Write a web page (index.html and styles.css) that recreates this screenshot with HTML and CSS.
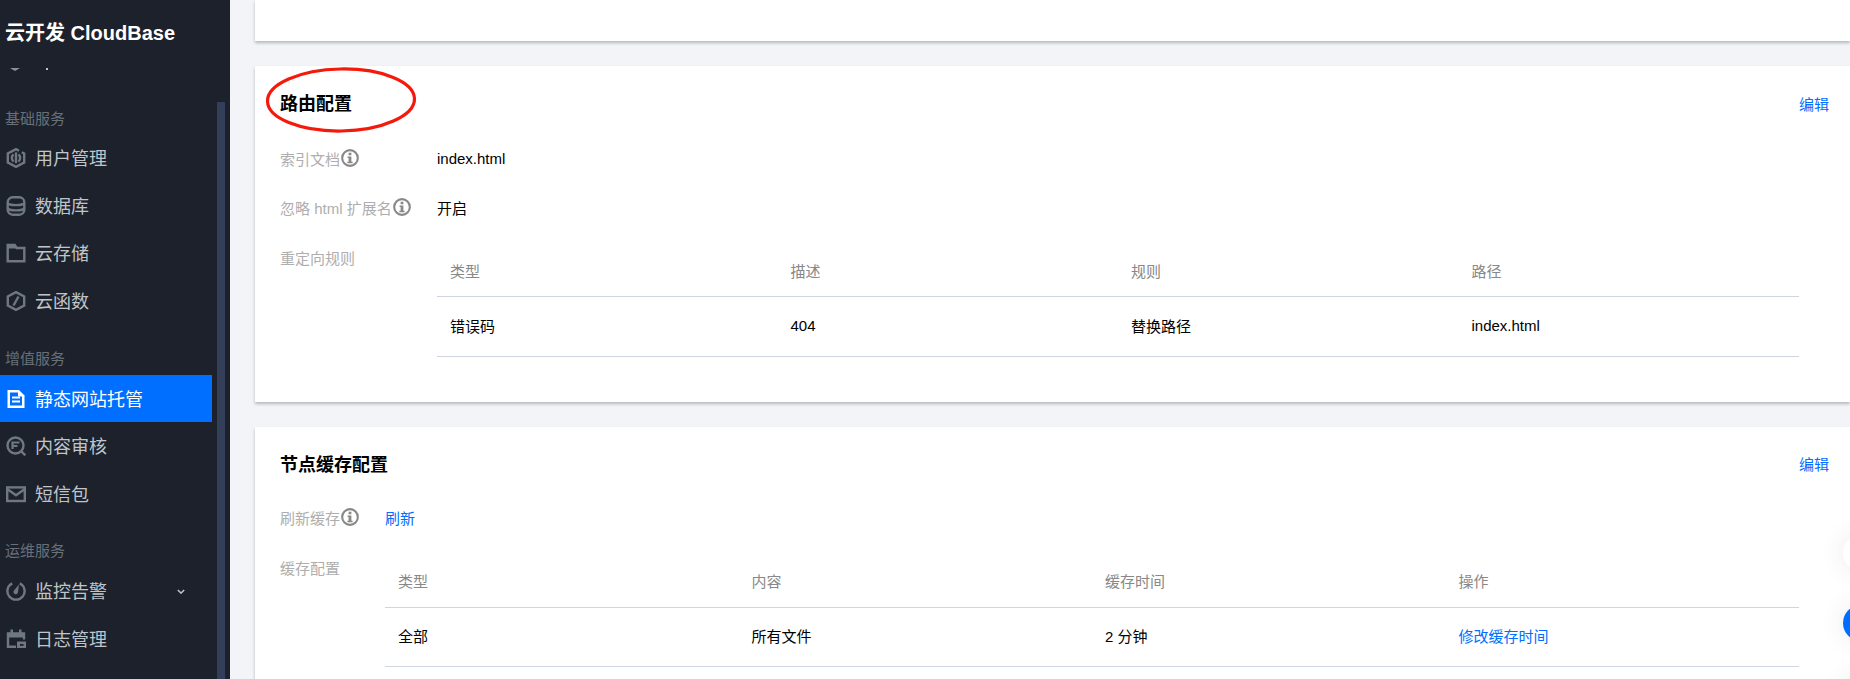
FILE: index.html
```html
<!DOCTYPE html>
<html lang="zh-CN">
<head>
<meta charset="utf-8">
<title>云开发 CloudBase</title>
<link rel="stylesheet" href="styles.css">
</head>
<body>
<svg class="defs" width="0" height="0" aria-hidden="true">
  <symbol id="info" viewBox="0 0 17 17">
    <circle cx="8.5" cy="8.5" r="7.4" fill="none" stroke="currentColor" stroke-width="2"/>
    <rect x="7.2" y="3.500" width="2.600" height="2.400" fill="currentColor"/>
    <path d="M6.200 7h3.600v5h1.200v1.500H6V12h1.200V8.500h-1z" fill="currentColor"/>
  </symbol>
</svg>
<div class="app">
  <aside class="sidebar">
    <div class="brand">云开发 CloudBase</div>
    <div class="clip-row">
      <svg class="clip-art" width="60" height="4" viewBox="0 0 60 4"><path d="M10 0h10l-5 3z" fill="#8a9299"/><rect x="46" y="0" width="2" height="2" fill="#c1c6c8"/></svg>
    </div>
    <nav class="nav">
      <div class="group first">基础服务</div>
      <a class="item">
        <svg class="ico" viewBox="0 0 20 20"><path d="M13 2.800 10 1.100 1.800 5.500v9L10 18.900l8.200-4.400v-9l-2.400-1.300" fill="none" stroke="currentColor" stroke-width="2.400"/><path d="M7.500 6.400a4.800 4.800 0 0 0 0 7.200M12.500 6.400a4.800 4.800 0 0 1 0 7.200" fill="none" stroke="currentColor" stroke-width="2.400"/><path d="M10 4.400v10.800" stroke="currentColor" stroke-width="2.400"/></svg>
        <span>用户管理</span>
      </a>
      <a class="item">
        <svg class="ico" viewBox="0 0 20 20"><rect x="1.700" y="1.300" width="16.600" height="17.400" rx="5" fill="none" stroke="currentColor" stroke-width="2.400"/><path d="M1.700 7.500c3 2.200 13.600 2.200 16.600 0M1.700 12.700c3 2.200 13.600 2.200 16.600 0" fill="none" stroke="currentColor" stroke-width="2.400"/></svg>
        <span>数据库</span>
      </a>
      <a class="item">
        <svg class="ico" viewBox="0 0 20 20"><path d="M1.700 2h7l2 3h7.600v13.300H1.700z" fill="none" stroke="currentColor" stroke-width="2.400"/><path d="M1.500 1.500h7.500l2.500 4h-10z" fill="currentColor"/></svg>
        <span>云存储</span>
      </a>
      <a class="item">
        <svg class="ico" viewBox="0 0 20 20"><path d="M10 1.100 18.200 5.500v9L10 18.900l-8.200-4.400v-9z" fill="none" stroke="currentColor" stroke-width="2.400"/><path d="m12.500 5.500-5 9" stroke="currentColor" stroke-width="2.400"/></svg>
        <span>云函数</span>
      </a>

      <div class="group">增值服务</div>
      <a class="item active">
        <svg class="ico" viewBox="0 0 20 20"><path d="M1.500 1h11.500l5.500 5.500V19h-17z" fill="#fff"/><path d="M4 3.500h8v4h4V16.500H4z" fill="#006eff"/><rect x="6" y="7.500" width="8" height="2" fill="#fff"/><rect x="6" y="11.500" width="8" height="2" fill="#fff"/></svg>
        <span>静态网站托管</span>
      </a>
      <a class="item">
        <svg class="ico" viewBox="0 0 20 20"><circle cx="9.500" cy="9.500" r="8" fill="none" stroke="currentColor" stroke-width="2.400"/><path d="m14.800 14.800 4.500 4.500" stroke="currentColor" stroke-width="2.400"/><path d="M6.500 13V6.500h7M6.500 10h5" fill="none" stroke="currentColor" stroke-width="2.200"/></svg>
        <span>内容审核</span>
      </a>
      <a class="item">
        <svg class="ico" viewBox="0 0 20 20"><rect x="1.200" y="3.400" width="17.600" height="13.600" fill="none" stroke="currentColor" stroke-width="2.400"/><path d="m1.500 5.200 8.500 6L18.500 5.200" fill="none" stroke="currentColor" stroke-width="2.400"/></svg>
        <span>短信包</span>
      </a>

      <div class="group group-ops">运维服务</div>
      <a class="item">
        <svg class="ico" viewBox="0 0 20 20"><path d="M6.200 2.300a8.600 8.600 0 1 0 7.600 0" fill="none" stroke="currentColor" stroke-width="2.400"/><path d="M13 3.500 12 11a2.300 2.300 0 1 1-3.800-1.800z" fill="currentColor"/></svg>
        <span>监控告警</span>
        <svg class="caret" viewBox="0 0 10 6"><path d="m1 1 4 4 4-4" fill="none" stroke="currentColor" stroke-width="1.800"/></svg>
      </a>
      <a class="item">
        <svg class="ico" viewBox="0 0 20 20"><path d="M10 17.800H2V4.500h16v6" fill="none" stroke="currentColor" stroke-width="2.400"/><path d="M2 4h16v4.500H2z" fill="currentColor"/><rect x="4.500" y="0.500" width="2.500" height="4" fill="currentColor"/><rect x="13" y="0.500" width="2.500" height="4" fill="currentColor"/><rect x="11" y="12.500" width="9" height="6.500" fill="currentColor"/><rect x="14" y="15" width="3.500" height="1.800" fill="#1d212c"/></svg>
        <span>日志管理</span>
      </a>
    </nav>
    <div class="scrollbar"></div>
  </aside>

  <main class="main">
    <section class="card card-top"></section>

    <section class="card card-route">
      <header class="card-head">
        <h2 class="card-title">路由配置</h2>
        <a class="link">编辑</a>
      </header>
      <div class="row row-first">
        <div class="label label-wide">索引文档<svg class="info"><use href="#info"/></svg></div>
        <div class="value">index.html</div>
      </div>
      <div class="row">
        <div class="label label-wide">忽略 html 扩展名<svg class="info"><use href="#info"/></svg></div>
        <div class="value">开启</div>
      </div>
      <div class="row row-table">
        <div class="label label-wide">重定向规则</div>
        <table class="tbl tbl-route">
          <thead><tr><th>类型</th><th>描述</th><th>规则</th><th>路径</th></tr></thead>
          <tbody><tr><td>错误码</td><td>404</td><td>替换路径</td><td>index.html</td></tr></tbody>
        </table>
      </div>
      <svg class="ring" width="156" height="70" viewBox="0 0 156 70"><ellipse cx="78" cy="35" rx="73.500" ry="31" fill="none" stroke="#f5190c" stroke-width="3.200" transform="rotate(-1 78 35)"/></svg>
    </section>

    <section class="card card-cache">
      <header class="card-head">
        <h2 class="card-title">节点缓存配置</h2>
        <a class="link">编辑</a>
      </header>
      <div class="row">
        <div class="label label-narrow">刷新缓存<svg class="info"><use href="#info"/></svg></div>
        <a class="value link">刷新</a>
      </div>
      <div class="row row-table">
        <div class="label label-narrow">缓存配置</div>
        <table class="tbl tbl-cache">
          <thead><tr><th>类型</th><th>内容</th><th>缓存时间</th><th>操作</th></tr></thead>
          <tbody><tr><td>全部</td><td>所有文件</td><td>2 分钟</td><td><a class="link">修改缓存时间</a></td></tr></tbody>
        </table>
      </div>
    </section>
  </main>
</div>
<div class="float float-white"></div>
<div class="float float-blue"></div>
<div class="float float-third"></div>
</body>
</html>
```

FILE: styles.css
```css
* { box-sizing: border-box; }
html, body { margin: 0; height: 679px; overflow: hidden; }
body {
  position: relative;
  font-family: "Liberation Sans", "Noto Sans CJK SC", sans-serif;
  font-size: 15px;
  color: #000;
  background: #f3f4f7;
}
.defs { position: absolute; }
.app { display: flex; height: 679px; }

/* Sidebar */
.sidebar {
  position: relative;
  flex: 0 0 230px;
  background: #1d212c;
  overflow: hidden;
}
.brand {
  height: 68px;
  padding: 21px 0 0 5px;
  font-size: 20px;
  line-height: 24px;
  font-weight: 700;
  color: #fff;
  white-space: nowrap;
}
.clip-row { height: 4px; overflow: hidden; }
.clip-art { display: block; }
.nav { width: 212px; padding-top: 29px; }
.group {
  height: 33px;
  margin-top: 16.5px;
  padding-left: 5px;
  font-size: 15px;
  line-height: 33px;
  color: #687078;
}
.group.first { margin-top: 0; padding-top: 1px; }
.group.group-ops { line-height: 31px; }
.item {
  display: flex;
  align-items: center;
  height: 47.8px;
  padding-left: 6px;
  font-size: 18px;
  color: #bfc5c9;
}
.item span { padding-bottom: 2px; }
.item.active { background: #006eff; color: #fff; }
.ico { flex: 0 0 20px; width: 20px; height: 20px; margin-right: 9px; color: #6f7880; }
.item.active .ico { color: #fff; }
.caret { width: 8px; height: 5px; margin-left: 70px; color: #bfc5c9; }
.scrollbar {
  position: absolute;
  left: 217px;
  top: 102px;
  bottom: 0;
  width: 8px;
  background: #333f58;
}

/* Main */
.main {
  flex: 1;
  min-width: 0;
  padding-left: 25px;
  display: flex;
  flex-direction: column;
  gap: 25px;
  overflow: hidden;
}
.card {
  position: relative;
  flex: none;
  background: #fff;
  padding: 0 21px 0 25px;
  box-shadow: 0 2px 3px 0 rgba(54, 58, 80, .32);
}
.card-top { height: 41px; }
.card-route { height: 336px; }
.card-cache { height: 300px; }
.card-head {
  display: flex;
  justify-content: space-between;
  align-items: center;
  height: 55px;
  margin-bottom: 11px;
  padding-top: 20px;
}
.card-cache .card-head { margin-bottom: 10px; }
.card-cache .card-head .link { padding-bottom: 2px; }
.card-title { margin: 0; padding-top: 2px; font-size: 18px; font-weight: 700; line-height: 35px; }
.link { color: #006eff; }
.row {
  display: flex;
  align-items: center;
  height: 50px;
}
.row-first { padding-top: 2px; }
.row-table { align-items: flex-start; height: auto; }
.row-table .label { height: 50px; }
.label {
  flex: none;
  display: flex;
  align-items: center;
  color: #aeaeae;
  white-space: nowrap;
}
.label-wide { width: 157px; }
.label-narrow { width: 105px; }
.info { width: 18px; height: 18px; margin-left: 1px; color: #888; }

/* Tables */
.tbl {
  flex: 1;
  margin: 16px 30px 0 0;
  table-layout: fixed;
  border-collapse: collapse;
  width: 0;
}
.tbl-cache { margin-top: 17px; }
.tbl th {
  height: 48px;
  padding: 0 13px 2px;
  font-weight: 400;
  text-align: left;
  color: #888;
  border-bottom: 1px solid #cfd5de;
}
.tbl td {
  height: 60px;
  padding: 0 13px 2px;
  border-bottom: 1px solid #cfd5de;
}
.tbl-cache td { height: 59px; padding-bottom: 3px; }
.tbl-cache th { padding-bottom: 4px; }

/* Overlays */
.ring { position: absolute; left: 8px; top: -1px; }
.float {
  position: absolute;
  width: 36px;
  height: 36px;
  border-radius: 50%;
  box-shadow: 0 0 24px rgba(54, 58, 80, .1);
}
.float-white { left: 1843px; top: 535px; background: #fff; }
.float-blue { left: 1843px; top: 605px; background: #006eff; }
.float-third { left: 1843px; top: 675px; background: #fff; }
```
